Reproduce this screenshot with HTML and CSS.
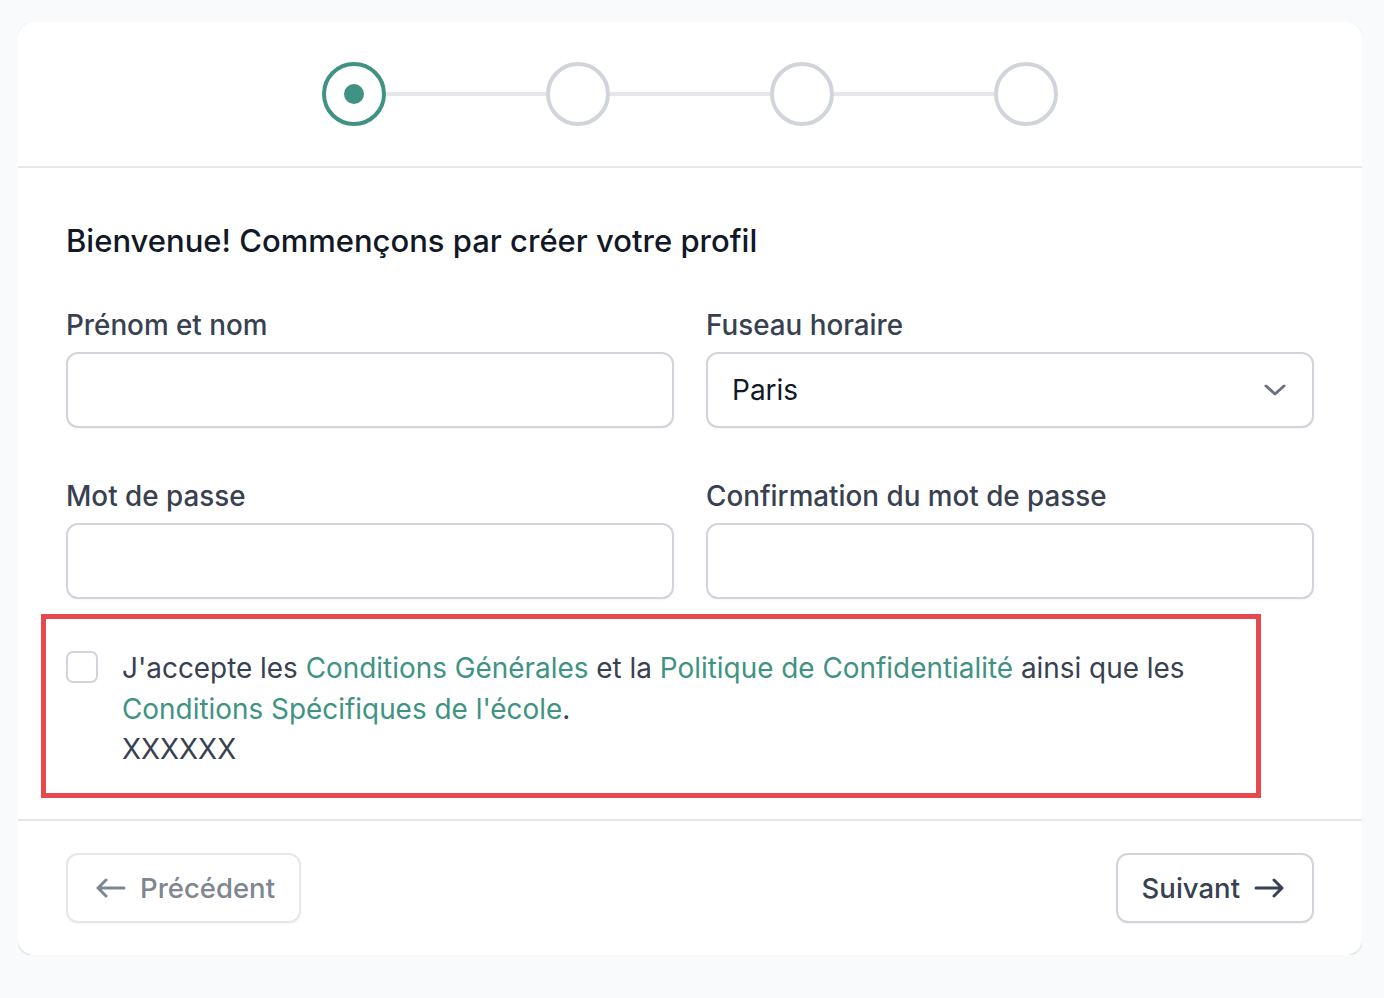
FILE: index.html
```html
<!DOCTYPE html>
<html lang="fr">
<head>
  <meta charset="UTF-8" />
  <meta name="viewport" content="width=device-width, initial-scale=1.0"/>
  <title>Créer votre profil</title>
  <link rel="stylesheet" href="styles.css">
</head>
<body>
  <div class="card">
    <div class="steps">
      <span class="step active"><span class="dot"></span></span>
      <span class="bar"></span>
      <span class="step"></span>
      <span class="bar"></span>
      <span class="step"></span>
      <span class="bar"></span>
      <span class="step"></span>
    </div>

    <div class="content">
      <h2>Bienvenue! Commençons par créer votre profil</h2>

      <div class="form-grid">
        <div>
          <label for="nom">Prénom et nom</label>
          <input type="text" id="nom">
        </div>
        <div>
          <label for="fuseau">Fuseau horaire</label>
          <div class="select">
            <select id="fuseau">
              <option>Paris</option>
            </select>
            <svg width="22" height="12" viewBox="0 0 22 12" fill="none" stroke="#6b7280" stroke-width="3" stroke-linecap="round" stroke-linejoin="round"><path d="M2 2l9 8 9-8"/></svg>
          </div>
        </div>
        <div>
          <label for="mdp">Mot de passe</label>
          <input type="password" id="mdp">
        </div>
        <div>
          <label for="mdp2">Confirmation du mot de passe</label>
          <input type="password" id="mdp2">
        </div>
      </div>

      <div class="terms">
        <input type="checkbox" id="cgu">
        <p>J'accepte les <a href="#">Conditions Générales</a> et la <a href="#">Politique de Confidentialité</a> ainsi que les <a href="#">Conditions Spécifiques de l'école</a>.<br>XXXXXX</p>
      </div>
    </div>

    <div class="footer">
      <button class="btn disabled">
        <svg width="30" height="20" viewBox="0 0 30 20" fill="none" stroke="currentColor" stroke-width="3" stroke-linecap="round" stroke-linejoin="round"><path d="M28 10H2M10 2L2 10l8 8"/></svg>
        Précédent
      </button>
      <button class="btn">
        Suivant
        <svg width="30" height="20" viewBox="0 0 30 20" fill="none" stroke="currentColor" stroke-width="3" stroke-linecap="round" stroke-linejoin="round"><path d="M2 10h26M20 2l8 8-8 8"/></svg>
      </button>
    </div>
  </div>
</body>
</html>
```

FILE: styles.css
```css
body {
  margin: 22px 22px 0 18px;
  background-color: #f9fafb;
  font-family: Inter, "Noto Sans", sans-serif;
  color: #374151;
}
.card {
  background: #fff;
  border-radius: 16px;
  box-shadow: 0 1px 3px rgba(0, 0, 0, 0.1), 0 1px 2px rgba(0, 0, 0, 0.06);
}
.steps {
  display: flex;
  justify-content: center;
  align-items: center;
  padding: 40px 0;
  border-bottom: 2px solid #e5e7eb;
}
.step {
  width: 64px;
  height: 64px;
  box-sizing: border-box;
  border: 4px solid #d1d5db;
  border-radius: 50%;
  display: flex;
  align-items: center;
  justify-content: center;
}
.step.active {
  border-color: #409383;
}
.dot {
  width: 20px;
  height: 20px;
  border-radius: 50%;
  background: #409383;
}
.bar {
  width: 160px;
  height: 4px;
  background: #e5e7eb;
}
.content {
  padding: 55px 48px 21px;
}
h2 {
  margin: 0 0 46px;
  font-size: 31px;
  line-height: 36px;
  font-weight: 500;
  color: #111827;
}
.form-grid {
  display: grid;
  grid-template-columns: 1fr 1fr;
  column-gap: 32px;
  row-gap: 48px;
}
.form-grid label {
  display: block;
  font-size: 27.8px;
  line-height: 40px;
  font-weight: 500;
  margin-bottom: 7px;
}
.form-grid input,
.form-grid select {
  display: block;
  width: 100%;
  height: 76px;
  box-sizing: border-box;
  border: 2px solid #d1d5db;
  border-radius: 12px;
  box-shadow: 0 1px 2px rgba(0, 0, 0, 0.05);
  padding: 0 24px;
  font-family: inherit;
  font-size: 28px;
  color: #111827;
  background: #fff;
}
.select {
  position: relative;
}
.select select {
  appearance: none;
}
.select svg {
  position: absolute;
  right: 28px;
  top: 32px;
}
.terms {
  display: flex;
  gap: 24px;
  margin: 15px 53px 0 -25px;
  border: 5px solid #e5484d;
  padding: 27px 20px 23px;
}
.terms input {
  flex: none;
  appearance: none;
  width: 32px;
  height: 32px;
  margin: 5px 0 0;
  border: 2px solid #d1d5db;
  border-radius: 7px;
  background: #fff;
}
.terms p {
  margin: 2px 0 0;
  font-size: 27.9px;
  line-height: 40.5px;
}
.terms a {
  color: #409383;
  text-decoration: none;
}
.footer {
  display: flex;
  justify-content: space-between;
  padding: 32px 48px;
  border-top: 2px solid #e5e7eb;
}
.btn {
  display: flex;
  align-items: center;
  gap: 14px;
  height: 70px;
  padding: 0 28px 0 24px;
  border: 2px solid #d1d5db;
  border-radius: 12px;
  background: #fff;
  box-shadow: 0 1px 2px rgba(0, 0, 0, 0.05);
  font-family: inherit;
  font-size: 27.5px;
  font-weight: 500;
  color: #374151;
  cursor: pointer;
}
.btn.disabled {
  padding: 0 24px 0 28px;
  border-color: #e5e7eb;
  color: #80868f;
}
```
